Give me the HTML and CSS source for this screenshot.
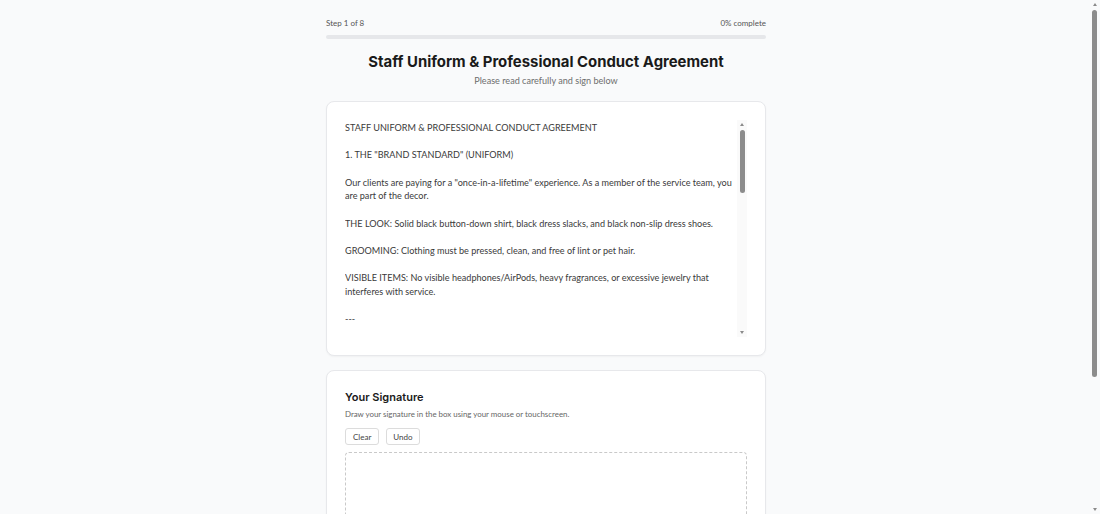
FILE: index.html
```html
<!DOCTYPE html>
<html lang="en">
<head>
<meta charset="utf-8">
<title>Staff Uniform &amp; Professional Conduct Agreement</title>
<link rel="stylesheet" href="styles.css">
</head>
<body>
<main class="wrap">
  <div class="progress-meta">
    <span>Step 1 of 8</span>
    <span>0% complete</span>
  </div>
  <div class="bar"><div class="bar-fill" style="width:0%"></div></div>

  <header class="head">
    <h1 class="title">Staff Uniform &amp; Professional Conduct Agreement</h1>
    <p class="subtitle">Please read carefully and sign below</p>
  </header>

  <section class="card doc-card">
    <div class="doc-body">
      <div class="doc">
<p>STAFF UNIFORM &amp; PROFESSIONAL CONDUCT AGREEMENT</p>
<p>1. THE "BRAND STANDARD" (UNIFORM)</p>
<p>Our clients are paying for a "once-in-a-lifetime" experience. As a member of the service team, you are part of the decor.</p>
<p>THE LOOK: Solid black button-down shirt, black dress slacks, and black non-slip dress shoes.</p>
<p>GROOMING: Clothing must be pressed, clean, and free of lint or pet hair.</p>
<p>VISIBLE ITEMS: No visible headphones/AirPods, heavy fragrances, or excessive jewelry that interferes with service.</p>
<p>---</p>
<p>2. PROFESSIONAL CONDUCT</p>
<p>ARRIVAL: Staff must arrive at least 15 minutes before the scheduled call time, fully dressed and ready to work.</p>
<p>PHONES: Personal phones must be silenced and kept out of sight while on the floor.</p>
<p>GUEST INTERACTION: Be courteous, discreet, and attentive at all times. Do not eat, drink, or take breaks in guest areas.</p>
<p>---</p>
<p>3. ACKNOWLEDGEMENT</p>
<p>By signing below, I confirm that I have read and understood this agreement and will follow these standards at every event.</p>
      </div>
      <div class="rail doc-rail" aria-hidden="true">
        <span class="arrow up"></span>
        <span class="track"><span class="thumb doc-thumb"></span></span>
        <span class="arrow down"></span>
      </div>
    </div>
  </section>

  <section class="card sig-card">
    <h2 class="sig-title">Your Signature</h2>
    <p class="sig-help">Draw your signature in the box using your mouse or touchscreen.</p>
    <div class="sig-actions">
      <button class="btn" type="button">Clear</button>
      <button class="btn" type="button">Undo</button>
    </div>
    <div class="sig-pad"></div>
  </section>
</main>

<div class="rail page-rail" aria-hidden="true">
  <span class="arrow up"></span>
  <span class="track"><span class="thumb page-thumb"></span></span>
  <span class="arrow down"></span>
</div>
</body>
</html>
```

FILE: styles.css
```css
* { box-sizing: border-box; }

html, body {
  margin: 0;
  padding: 0;
}

html { scrollbar-width: none; }
html::-webkit-scrollbar { display: none; }

body {
  background: #f9fafb;
  font-family: "Lato", "Liberation Sans", sans-serif;
  color: #333;
  padding-right: 8px;
}

.wrap {
  width: 440px;
  margin: 0 auto;
  padding: 18px 0 40px;
}

.progress-meta {
  display: flex;
  justify-content: space-between;
  font-size: 8px;
  line-height: 10px;
  color: #555;
}

.bar {
  margin-top: 7px;
  height: 4px;
  border-radius: 2px;
  background: #e6e7ea;
  overflow: hidden;
}

.bar-fill {
  height: 100%;
  background: #111;
}

.head {
  text-align: center;
  margin-top: 13px;
}

.title {
  margin: 0;
  font-family: "Inter", "Noto Sans", sans-serif;
  font-weight: 700;
  font-size: 14.9px;
  line-height: 20px;
  color: #1a1a1a;
}

.subtitle {
  margin: 3px 0 0;
  font-size: 9.1px;
  line-height: 12px;
  color: #6e6e6e;
}

.card {
  background: #fff;
  border: 1px solid #e7e8eb;
  border-radius: 8px;
  box-shadow: 0 1px 2px rgba(0, 0, 0, 0.04);
  padding: 18px;
}

.doc-card {
  margin-top: 14px;
}

.doc-body {
  display: flex;
  height: 217px;
}

.doc {
  flex: 1;
  min-width: 0;
  overflow-y: auto;
  scrollbar-width: none;
  padding-top: 1px;
  font-size: 9.1px;
  line-height: 13.65px;
  color: #3a3a3a;
}
.doc::-webkit-scrollbar { display: none; }

.doc p {
  margin: 0 0 13.65px;
}

/* drawn scrollbars */
.rail {
  display: flex;
  flex-direction: column;
  align-items: center;
  width: 10px;
  background: #fafafa;
}

.arrow {
  flex: 0 0 9px;
  display: flex;
  align-items: center;
  justify-content: center;
}
.arrow::before {
  content: "";
  width: 0;
  height: 0;
  border-left: 2.5px solid transparent;
  border-right: 2.5px solid transparent;
}
.arrow.up::before { border-bottom: 3px solid #8a8a8a; }
.arrow.down::before { border-top: 3px solid #8a8a8a; }

.track {
  flex: 1;
  display: flex;
  justify-content: center;
  width: 100%;
}

.thumb {
  width: 5px;
  border-radius: 3px;
  background: #8c8c8c;
}

.doc-thumb {
  margin-top: 1px;
  height: 63px;
}

.page-rail {
  position: fixed;
  top: 0;
  right: 0;
  bottom: 0;
  width: 11px;
  background: #f9fafb;
}

.page-thumb {
  margin-top: 1px;
  height: 367px;
}

.sig-card {
  margin-top: 14px;
}

.sig-title {
  margin: 1px 0 0;
  font-family: "Inter", "Noto Sans", sans-serif;
  font-weight: 600;
  font-size: 11px;
  line-height: 14px;
  color: #1a1a1a;
}

.sig-help {
  margin: 5px 0 0;
  font-size: 7.9px;
  line-height: 10px;
  color: #666;
}

.sig-actions {
  display: flex;
  gap: 7px;
  margin-top: 9px;
}

.btn {
  font-family: "Lato", "Liberation Sans", sans-serif;
  font-size: 8px;
  line-height: 10px;
  color: #444;
  background: #fff;
  border: 1px solid #dcdcdc;
  border-radius: 3px;
  padding: 3px 7px 2px;
  height: 17px;
}

.btn + .btn {
  padding: 3px 6px 2px;
}

.sig-pad {
  margin-top: 7px;
  height: 160px;
  border: 1px dashed #c9c9c9;
  border-radius: 4px;
}
```
